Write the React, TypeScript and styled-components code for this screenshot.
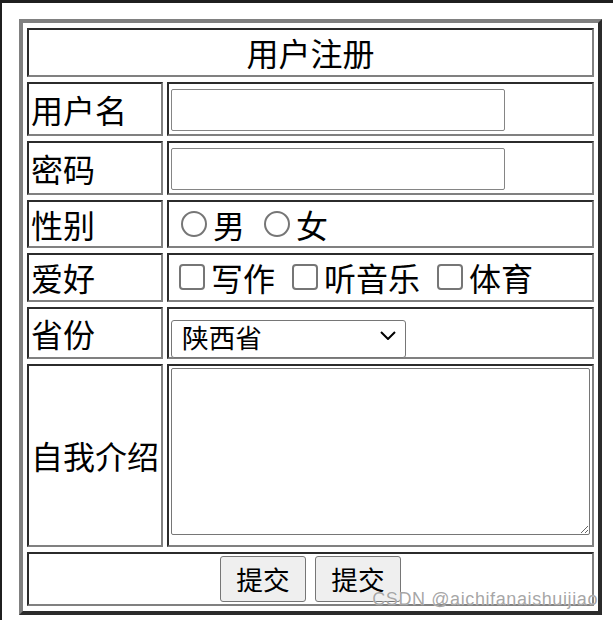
import styled, { createGlobalStyle } from 'styled-components'

const GlobalStyle = createGlobalStyle`
  html, body {
    margin: 0;
    padding: 0;
    background: #ffffff;
  }
  body {
    font-family: "Noto Sans CJK SC", "Liberation Sans", sans-serif;
    color: #000000;
  }
`

const CJK = `"Noto Sans CJK SC", "Liberation Sans", sans-serif`

const Page = styled.div`
  position: relative;
  box-sizing: border-box;
  width: 613px;
  height: 620px;
  border-top: 3px solid #1f1f1f;
  border-left: 2px solid #1f1f1f;
  padding: 16px 0 0 17px;
  overflow: hidden;
`

const FormTable = styled.table`
  box-sizing: border-box;
  width: 583px;
  table-layout: fixed;
  border-collapse: separate;
  border-spacing: 4px 5px;
  border-style: solid;
  border-width: 4px;
  border-color: #808080 #2b2b2b #2b2b2b #808080;
  font-family: ${CJK};
  font-size: 32px;
`

const Row = styled.tr<{ $h: number }>`
  height: ${(p) => p.$h}px;
`

const Cell = styled.td<{ $center?: boolean; $top?: boolean }>`
  border-style: solid;
  border-width: 2px;
  border-color: #2b2b2b #808080 #808080 #2b2b2b;
  padding: 2px;
  line-height: 1.15;
  white-space: nowrap;
  text-align: ${(p) => (p.$center ? 'center' : 'left')};
  vertical-align: ${(p) => (p.$top ? 'top' : 'middle')};
`

const TextInput = styled.input`
  display: block;
  box-sizing: border-box;
  width: 334px;
  height: 42px;
  margin: 2px 0 0 0;
  padding: 0 4px;
  border: 1px solid #858585;
  border-radius: 2px;
  font-family: ${CJK};
  font-size: 26.67px;
  background: #ffffff;
`

const Choices = styled.div`
  display: flex;
  align-items: center;
`

const Choice = styled.label`
  display: flex;
  align-items: center;
  margin-right: 9px;
`

const Radio = styled.input`
  appearance: none;
  box-sizing: border-box;
  width: 26px;
  height: 26px;
  margin: 0 6px 0 10px;
  border: 2px solid #767676;
  border-radius: 50%;
  background: #ffffff;
`

const Check = styled.input`
  appearance: none;
  box-sizing: border-box;
  width: 26px;
  height: 26px;
  margin: 0 6px 0 8px;
  border: 2px solid #767676;
  border-radius: 4px;
  background: #ffffff;
`

const SelectBox = styled.div`
  position: relative;
  width: 235px;
  height: 38px;
  margin-top: 3px;
`

const Select = styled.select`
  appearance: none;
  box-sizing: border-box;
  width: 100%;
  height: 100%;
  margin: 0;
  padding: 0 0 4px 10px;
  border: 1px solid #767676;
  border-radius: 3px;
  background: #ffffff;
  color: #000000;
  font-family: ${CJK};
  font-size: 26.67px;
  line-height: 32px;
`

const Chevron = styled.svg`
  position: absolute;
  right: 10px;
  top: 15px;
  pointer-events: none;
`

const Intro = styled.textarea`
  display: block;
  box-sizing: border-box;
  width: 419px;
  height: 167px;
  margin: 0;
  border: 1px solid #767676;
  border-radius: 2px;
  font-family: ${CJK};
  font-size: 26.67px;
`

const ButtonBar = styled.div`
  display: flex;
  justify-content: center;
  gap: 9px;
`

const Button = styled.button`
  box-sizing: border-box;
  width: 86px;
  height: 46px;
  padding: 0 0 2px 0;
  border: 1px solid #767676;
  border-radius: 3px;
  background: #efefef;
  color: #000000;
  font-family: ${CJK};
  font-size: 26.67px;
`

const Watermark = styled.div`
  position: absolute;
  right: 15px;
  bottom: 12px;
  font-family: "Liberation Sans", Arial, sans-serif;
  font-size: 18px;
  letter-spacing: 0.6px;
  line-height: 1;
  color: rgba(150, 150, 150, 0.85);
  text-shadow: 0 0 1px #ffffff;
  white-space: nowrap;
`

export default function App() {
  return (
    <Page>
      <GlobalStyle />
      <FormTable>
        <colgroup>
          <col style={{ width: 136 }} />
          <col />
        </colgroup>
        <tbody>
          <Row $h={49}>
            <Cell colSpan={2} $center>
              用户注册
            </Cell>
          </Row>
          <Row $h={54}>
            <Cell>用户名</Cell>
            <Cell>
              <TextInput type="text" />
            </Cell>
          </Row>
          <Row $h={54}>
            <Cell>密码</Cell>
            <Cell>
              <TextInput type="password" />
            </Cell>
          </Row>
          <Row $h={48}>
            <Cell>性别</Cell>
            <Cell>
              <Choices>
                <Choice>
                  <Radio type="radio" name="sex" />男
                </Choice>
                <Choice>
                  <Radio type="radio" name="sex" />女
                </Choice>
              </Choices>
            </Cell>
          </Row>
          <Row $h={49}>
            <Cell>爱好</Cell>
            <Cell>
              <Choices>
                <Choice>
                  <Check type="checkbox" />写作
                </Choice>
                <Choice>
                  <Check type="checkbox" />听音乐
                </Choice>
                <Choice>
                  <Check type="checkbox" />体育
                </Choice>
              </Choices>
            </Cell>
          </Row>
          <Row $h={52}>
            <Cell>省份</Cell>
            <Cell>
              <SelectBox>
                <Select defaultValue="sx">
                  <option value="sx">陕西省</option>
                  <option value="hn">河南省</option>
                </Select>
                <Chevron width="16" height="9" viewBox="0 0 16 9">
                  <polyline
                    points="1,1 8,8 15,1"
                    fill="none"
                    stroke="#000"
                    strokeWidth="2"
                  />
                </Chevron>
              </SelectBox>
            </Cell>
          </Row>
          <Row $h={183}>
            <Cell>自我介绍</Cell>
            <Cell $top>
              <Intro />
            </Cell>
          </Row>
          <Row $h={54}>
            <Cell colSpan={2} $center>
              <ButtonBar>
                <Button type="submit">提交</Button>
                <Button type="reset">提交</Button>
              </ButtonBar>
            </Cell>
          </Row>
        </tbody>
      </FormTable>
      <Watermark>CSDN @aichifanaishuijiao</Watermark>
    </Page>
  )
}
